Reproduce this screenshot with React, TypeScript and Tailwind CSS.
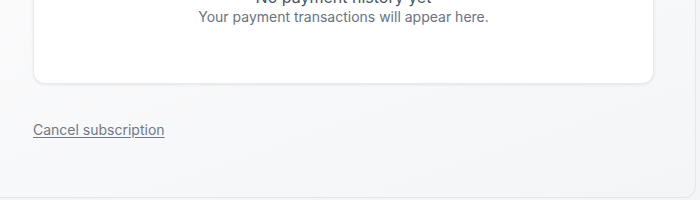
export default function App() {
  return (
    <div className="h-[200px] w-[700px] overflow-hidden bg-[#f4f5f7] font-['Inter','Liberation_Sans',sans-serif]">
      <div className="-mt-[41px] h-[239px] w-[696px] rounded-br-xl border-r border-b border-[#e4e6ea] bg-gradient-to-br from-[#fbfbfc] to-[#f4f5f6] pl-[33px]">
        <div className="w-[621px] rounded-xl border border-[#e8eaed] bg-white pt-[25px] pb-[56px] text-center shadow-[0_1px_3px_rgba(0,0,0,0.08)]">
          <h3 className="-mb-[2px] text-base leading-6 font-normal text-[#4b5563]">
            No payment history yet
          </h3>
          <p className="text-sm leading-5 text-[#6b7280]">
            Your payment transactions will appear here.
          </p>
        </div>
        <div className="mt-[33px]">
          <a
            href="#"
            className="text-sm leading-5 text-[#717886] underline underline-offset-2"
          >
            Cancel subscription
          </a>
        </div>
      </div>
    </div>
  );
}
